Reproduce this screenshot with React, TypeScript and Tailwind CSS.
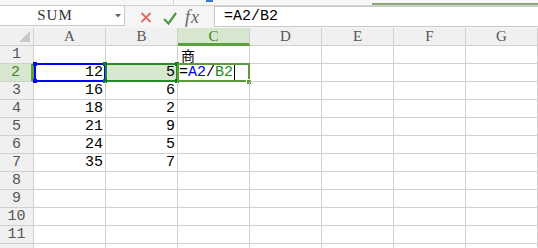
import React from "react";

const COLS = ["A", "B", "C", "D", "E", "F", "G"];
const DATA: Record<number, [string, string]> = {
  2: ["12", "5"],
  3: ["16", "6"],
  4: ["18", "2"],
  5: ["21", "9"],
  6: ["24", "5"],
  7: ["35", "7"],
};

function Cell({ r, c }: { r: number; c: number }) {
  const base = "relative h-[18px] border-r border-b border-[#d0d0d0] flex items-center";
  if (r === 2 && c === 0) {
    return (
      <div className={base + " justify-end pr-[2px] text-black"}>
        <div className="absolute left-0 top-[-1px] w-[72px] h-[19px] border-2 border-[#0000ff]" />
        <div className="absolute left-[-1px] top-[-2px] w-[4px] h-[4px] bg-[#0000ff]" />
        <div className="absolute left-[-1px] bottom-[-2px] w-[4px] h-[4px] bg-[#0000ff]" />
        <span className="relative">12</span>
      </div>
    );
  }
  if (r === 2 && c === 1) {
    return (
      <div className={base + " justify-end pr-[2px] text-black bg-[#d8e8d0]"}>
        <div className="absolute left-[-1px] top-[-1px] w-[73px] h-[19px] border-2 border-[#2a8a2a]" />
        <div className="absolute left-[-3px] top-[-2px] w-[4px] h-[4px] bg-[#0a7a1a]" />
        <div className="absolute left-[-3px] bottom-[-2px] w-[4px] h-[4px] bg-[#0a7a1a]" />
        <div className="absolute right-[-2px] top-[-2px] w-[4px] h-[4px] bg-[#0a7a1a]" />
        <div className="absolute right-[-2px] bottom-[-2px] w-[4px] h-[4px] bg-[#0a7a1a]" />
        <span className="relative">5</span>
      </div>
    );
  }
  if (r === 2 && c === 2) {
    return (
      <div className={base + " pl-[1px]"}>
        <div className="absolute left-[-1px] top-[-1px] w-[73px] h-[19px] border-2 border-[#5b9b3b]" />
        <div className="absolute right-[-3px] bottom-[-4px] w-[4px] h-[4px] bg-[#5b9b3b] border border-white box-content" />
        <span className="relative text-black">=</span>
        <span className="relative text-[#0000ff]">A2</span>
        <span className="relative text-black">/</span>
        <span className="relative text-[#1a8a1a]">B2</span>
        <span className="relative ml-[1px] w-[1px] h-[15px] bg-black" />
      </div>
    );
  }
  if (r === 1 && c === 2) {
    return (
      <div className={base + " pl-[3px] text-black"}>
        <span className="font-['Noto_Sans_CJK_SC',sans-serif] text-[14px] leading-none">商</span>
      </div>
    );
  }
  const v = DATA[r] ? (c < 2 ? DATA[r][c] : "") : "";
  return <div className={base + " justify-end pr-[2px] text-black"}>{v}</div>;
}

export default function App() {
  const rows = Array.from({ length: 12 }, (_, i) => i + 1);
  return (
    <div className="w-[538px] h-[248px] overflow-hidden bg-white font-['Liberation_Mono',monospace] text-[15px] leading-none">
      {/* top strip */}
      <div className="h-[6px] bg-[#f7f7f7] border-b border-[#d0d0d0] flex">
        <div className="w-[173px]" />
        <div className="w-[1px] h-[5px] bg-[#d8d8d8]" />
        <div className="w-[32px]" />
        <div className="w-[7px] h-[2px] bg-[#3b6fd0]" />
        <div className="w-[159px]" />
        <div className="flex-1 mt-[3px] h-[2px] bg-[#88a878]" />
      </div>
      {/* formula bar */}
      <div className="h-[22px] bg-[#f5f5f5] flex items-start">
        <div className="mt-[-1px] w-[125px] h-[21px] bg-white border border-l-0 border-[#c8c8c8] flex items-center relative">
          <span className="flex-1 text-center text-[#333] text-[15px] font-['Liberation_Serif',serif] tracking-[1px] pr-[14px]">SUM</span>
          <svg className="absolute left-[115px] top-[8px]" width="6" height="4" viewBox="0 0 6 4">
            <path d="M0 0 H6 L3 3.5 Z" fill="#666" />
          </svg>
        </div>
        <div className="w-[15px]" />
        <svg width="12" height="22" viewBox="0 0 12 22">
          <path d="M1.5 7 L10.5 16 M10.5 7 L1.5 16" stroke="#dd6a6a" strokeWidth="1.8" />
        </svg>
        <div className="w-[11px]" />
        <svg width="14" height="22" viewBox="0 0 14 22">
          <path d="M1 13 L5.5 17.5 L13 7" stroke="#4d9a44" strokeWidth="2.2" fill="none" />
        </svg>
        <div className="w-[8px]" />
        <span className="h-[22px] flex items-center font-['Liberation_Serif',serif] italic text-[18px] text-[#666] tracking-[1px]">fx</span>
        <div className="w-[14px]" />
        <div className="flex-1 h-[21px] bg-white border-y border-l border-[#c8c8c8] flex items-center pl-[9px] text-black text-[15px]">
          =A2/B2
        </div>
      </div>
      {/* grid */}
      <div className="grid grid-cols-[34px_repeat(7,72px)]">
        <div className="h-[18px] bg-[#f0f0f0] border-r border-b border-[#d0d0d0] relative">
          <svg className="absolute right-[3px] bottom-[3px]" width="11" height="11" viewBox="0 0 11 11">
            <path d="M11 0 V11 H0 Z" fill="#c8c8c8" />
          </svg>
        </div>
        {COLS.map((c) =>
          c === "C" ? (
            <div key={c} className="h-[18px] bg-[#d7e6cf] border-r border-[#d0d0d0] border-b-[3px] border-b-[#5b9f3f] flex items-center justify-center text-[#3d8a1f] text-[15px] font-['Liberation_Serif',serif] pt-[2px]">
              {c}
            </div>
          ) : (
            <div key={c} className="h-[18px] bg-[#f0f0f0] border-r border-b border-[#d0d0d0] flex items-center justify-center text-[#555] text-[15px] font-['Liberation_Serif',serif]">
              {c}
            </div>
          )
        )}
        {rows.map((r) => (
          <React.Fragment key={r}>
            {r === 2 ? (
              <div className="h-[18px] bg-[#d7e6cf] border-r-[3px] border-r-[#5b9f3f] border-b border-b-[#d0d0d0] flex items-center justify-center text-[#3d8a1f]">
                {r}
              </div>
            ) : (
              <div className="h-[18px] bg-[#f0f0f0] border-r border-b border-[#d0d0d0] flex items-center justify-center text-[#555]">
                {r < 12 ? r : ""}
              </div>
            )}
            {COLS.map((_, ci) => (
              <Cell key={ci} r={r} c={ci} />
            ))}
          </React.Fragment>
        ))}
      </div>
    </div>
  );
}
